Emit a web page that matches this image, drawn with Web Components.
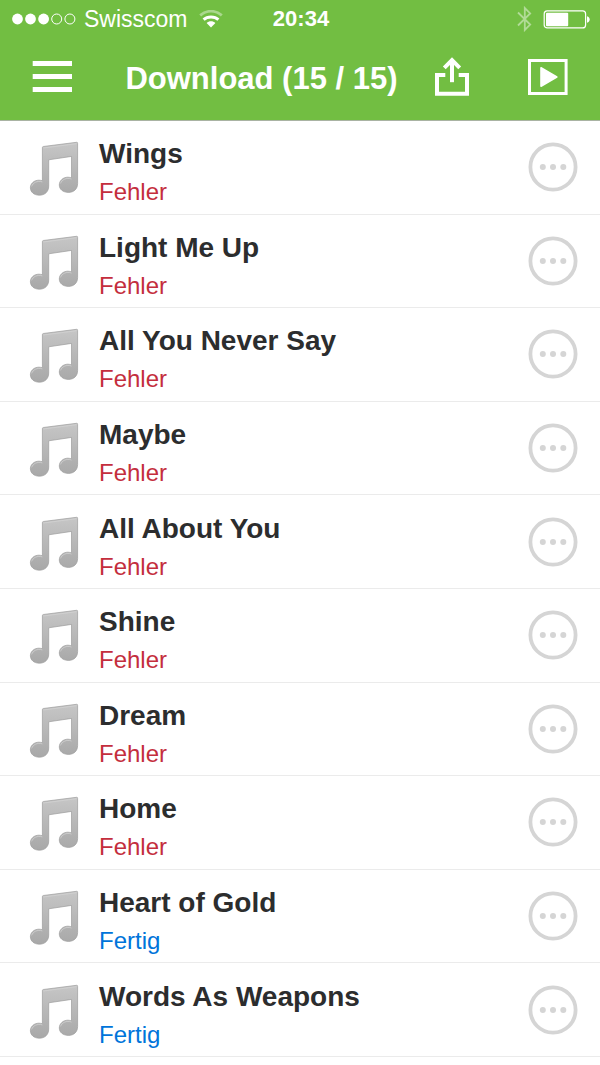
<!DOCTYPE html>
<html lang="de">
<head>
<meta charset="utf-8">
<meta name="viewport" content="width=device-width, initial-scale=1">
<title>Download</title>
<style>
  body {
    margin: 0;
    min-height: 100vh;
    display: flex;
    flex-direction: column;
    background: #fff;
    font-family: "Liberation Sans", Arial, sans-serif;
    --bar-color: #72be42;
    --title-color: #2c2d2e;
    --error-color: #c42e3d;
    --done-color: #0074da;
    --line-color: #ebebeb;
    --control-color: #d5d5d5;
  }

  header {
    background: var(--bar-color);
    color: #fff;
    border-bottom: 1px solid #a9b3a3;
  }

  track-list {
    flex: 1;
  }
</style>
</head>
<body>
  <header>
    <status-bar carrier="Swisscom" time="20:34"></status-bar>
    <nav-bar>Download (15 / 15)</nav-bar>
  </header>

  <track-list>
    <track-row status="error">Wings<span slot="status">Fehler</span></track-row>
    <track-row status="error">Light Me Up<span slot="status">Fehler</span></track-row>
    <track-row status="error">All You Never Say<span slot="status">Fehler</span></track-row>
    <track-row status="error">Maybe<span slot="status">Fehler</span></track-row>
    <track-row status="error">All About You<span slot="status">Fehler</span></track-row>
    <track-row status="error">Shine<span slot="status">Fehler</span></track-row>
    <track-row status="error">Dream<span slot="status">Fehler</span></track-row>
    <track-row status="error">Home<span slot="status">Fehler</span></track-row>
    <track-row status="done">Heart of Gold<span slot="status">Fertig</span></track-row>
    <track-row status="done">Words As Weapons<span slot="status">Fertig</span></track-row>
  </track-list>

<script>
const buttonStyles = `
  button {
    display: flex;
    flex: none;
    margin: 0;
    padding: 0;
    border: 0;
    background: none;
    color: inherit;
    cursor: pointer;
  }
`;

// Attach an open shadow root and fill it from a markup string
class BaseElement extends HTMLElement {
  constructor() {
    super();
    const template = document.createElement("template");
    template.innerHTML = this.constructor.markup;
    this.attachShadow({ mode: "open" }).appendChild(template.content.cloneNode(true));
  }
}

class StatusBar extends BaseElement {
  static markup = `
    <style>
      :host {
        display: grid;
        grid-template-columns: 1fr auto 1fr;
        align-items: center;
        height: 38px;
        padding: 0 10px 2px 12px;
        font-size: 23px;
        line-height: 28px;
      }

      .left, .right {
        display: flex;
        align-items: center;
      }

      .left { gap: 8px; }
      .right { gap: 11px; justify-content: flex-end; }
      .carrier { margin-right: 3px; }
      .time { font-size: 22px; font-weight: bold; }
      svg { display: block; flex: none; }
    </style>

    <div class="left">
      <svg width="64" height="12" viewBox="0 0 64 12" aria-hidden="true">
        <g fill="#fff">
          <circle cx="5.5" cy="6" r="5.4"/>
          <circle cx="18.5" cy="6" r="5.4"/>
          <circle cx="31.6" cy="6" r="5.4"/>
        </g>
        <g fill="none" stroke="#fff">
          <circle cx="44.7" cy="6" r="5"/>
          <circle cx="57.9" cy="6" r="5"/>
        </g>
      </svg>
      <span class="carrier"></span>
      <svg width="24" height="18" viewBox="0 0 24 18" aria-hidden="true">
        <path d="M1.2 5.4C7.5 -.2 16.5 -.2 22.8 5.4" fill="none" stroke="#fff" stroke-opacity=".4" stroke-width="2.8"/>
        <path d="M4.6 9.6C8.6 6 15.4 6 19.4 9.6" fill="none" stroke="#fff" stroke-width="3"/>
        <path d="M12 17.4 7.6 13C10 10.8 14 10.8 16.4 13Z" fill="#fff"/>
      </svg>
    </div>
    <span class="time"></span>
    <div class="right">
      <svg width="15" height="26" viewBox="0 0 15 26" aria-hidden="true">
        <path d="M1 6.5 13.2 18.6 7.8 24V2L13.2 7.4 1 19.5" fill="none" stroke="#fff" stroke-opacity=".45" stroke-width="1.8"/>
      </svg>
      <svg width="47" height="19" viewBox="0 0 47 19" aria-hidden="true">
        <rect x="1.2" y=".9" width="41.4" height="17" rx="3" fill="none" stroke="#fff" stroke-width="1.2"/>
        <rect x="3" y="2.7" width="22.2" height="13.6" rx="1" fill="#fff"/>
        <path d="M44 6.2c3.6 1 3.6 5.6 0 6.6Z" fill="#fff"/>
      </svg>
    </div>
  `;

  connectedCallback() {
    this.shadowRoot.querySelector(".carrier").textContent = this.getAttribute("carrier");
    this.shadowRoot.querySelector(".time").textContent = this.getAttribute("time");
  }
}

class NavBar extends BaseElement {
  static markup = `
    <style>
      :host {
        display: flex;
        align-items: center;
        height: 74px;
        padding: 0 32px 6px;
      }

      ${buttonStyles}

      h1 {
        flex: 1;
        margin: 0 0 0 16px;
        padding-top: 4px;
        font-size: 31px;
        line-height: 40px;
        font-weight: bold;
        text-align: center;
        white-space: nowrap;
      }

      .play { margin-left: 58px; }
    </style>

    <button type="button" aria-label="Menü">
      <svg width="40" height="32" viewBox="0 0 40 32">
        <path d="M.7 2.5H40M.7 15.5H40M.7 28.5H40" stroke="#fff" stroke-width="4.8"/>
      </svg>
    </button>
    <h1><slot></slot></h1>
    <button type="button" aria-label="Teilen">
      <svg width="35" height="40" viewBox="0 0 35 40" fill="none" stroke="#fff" stroke-width="4">
        <path d="M10.3 18.1H2V36.7H32V18.1H23.7"/>
        <path d="M17 25.2V3.5"/>
        <path d="M9.3 10.9 17 3.1 24.7 10.9"/>
      </svg>
    </button>
    <button type="button" class="play" aria-label="Wiedergabe">
      <svg width="40" height="36" viewBox="0 0 40 36">
        <rect x="1.5" y="1.5" width="36.6" height="33" fill="none" stroke="#fff" stroke-width="3"/>
        <path d="M13 8.8 28.8 18 13 27.2Z" fill="#fff" stroke="#fff" stroke-width="1.6" stroke-linejoin="round"/>
      </svg>
    </button>
  `;
}

class TrackList extends BaseElement {
  static markup = `
    <style>
      :host {
        display: grid;
        grid-auto-rows: 1fr;
        padding-bottom: 8px;
      }
    </style>

    <slot></slot>
  `;

  connectedCallback() {
    this.setAttribute("role", "list");
  }
}

class TrackRow extends BaseElement {
  static markup = `
    <style>
      :host {
        display: flex;
        align-items: center;
        gap: 20px;
        padding: 0 22px 0 29px;
        border-bottom: 1px solid var(--line-color);
      }

      ${buttonStyles}

      .text {
        flex: 1;
        display: grid;
        padding-top: 12px;
      }

      .title, .status {
        line-height: 38px;
      }

      .title {
        color: var(--title-color);
        font-size: 28px;
        font-weight: bold;
      }

      .status {
        color: var(--error-color);
        font-size: 24px;
      }

      :host([status="done"]) .status {
        color: var(--done-color);
      }

      .note { flex: none; }
    </style>

    <svg class="note" width="50" height="60" viewBox="0 0 50 60" aria-hidden="true">
      <defs>
        <linearGradient id="shade" x1="0" y1="0" x2="0" y2="1">
          <stop offset="0" stop-color="#c6c6c6"/>
          <stop offset="1" stop-color="#a8a8a8"/>
        </linearGradient>
      </defs>
      <g transform="translate(0 4)">
        <path d="M13.4 6.6Q13.4 5.7 14.3 5.5L47.6 1.3Q48.6 1.2 48.6 2.2V42.5C48.6 47.8 45 51.4 39.6 51.4C34 51.4 30.3 48.3 30.3 44C30.3 39.6 34.2 36.2 38.8 36.2Q40.8 36.2 42.5 36.9V15.4L19.7 18.8V45C19.7 50.6 16 54.2 10.4 54.2C4.9 54.2 1.4 51 1.4 46.8C1.4 42.4 5.2 39.2 9.8 39.2Q11.8 39.2 13.4 39.8Z" fill="url(#shade)" stroke="#9c9c9c" stroke-width=".7"/>
        <path d="M14.4 7 47.6 2.7M2.6 45.4C3.8 41.8 8.4 39.2 13.4 40.9M31.5 42.4C33 38.4 37.6 36.3 42.5 38" fill="none" stroke="#d2d2d2" stroke-width=".8"/>
      </g>
    </svg>
    <div class="text">
      <div class="title"><slot></slot></div>
      <div class="status"><slot name="status"></slot></div>
    </div>
    <button type="button" aria-label="Mehr">
      <svg width="50" height="50" viewBox="0 0 50 50">
        <circle cx="25" cy="25" r="22.6" fill="none" stroke="var(--control-color)" stroke-width="3.8"/>
        <g fill="var(--control-color)">
          <circle cx="14.8" cy="25" r="3"/>
          <circle cx="25" cy="25" r="3"/>
          <circle cx="35.3" cy="25" r="3"/>
        </g>
      </svg>
    </button>
  `;

  connectedCallback() {
    this.setAttribute("role", "listitem");
  }
}

// Define the custom elements
customElements.define("status-bar", StatusBar);
customElements.define("nav-bar", NavBar);
customElements.define("track-list", TrackList);
customElements.define("track-row", TrackRow);
</script>
</body>
</html>
